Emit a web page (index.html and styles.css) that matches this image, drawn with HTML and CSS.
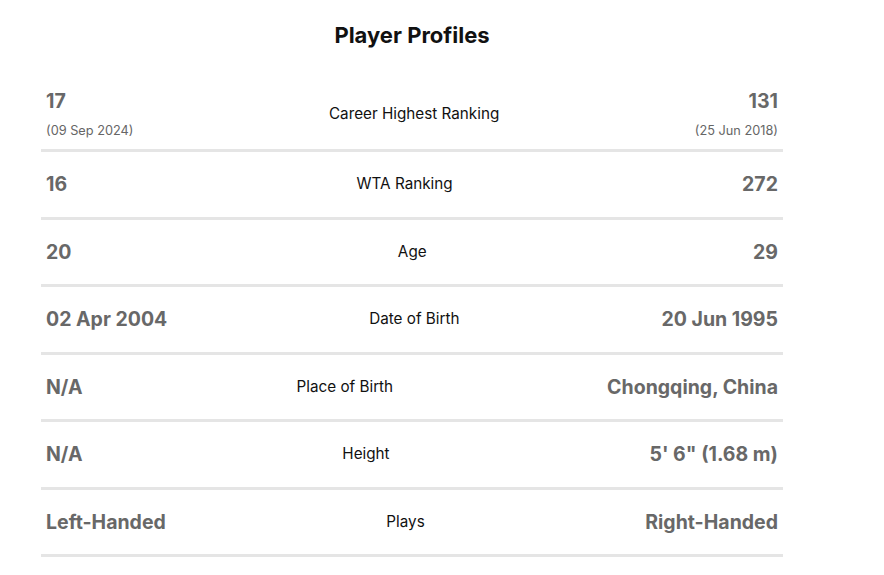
FILE: index.html
```html
<!DOCTYPE html>
<html lang="en">
<head>
<meta charset="utf-8">
<title>Player Profiles</title>
<link rel="stylesheet" href="styles.css">
</head>
<body>
<div class="wrap">
  <h2 class="title">Player Profiles</h2>
  <div class="table">
    <div class="row">
      <div class="val left">17<div class="sub">(09 Sep 2024)</div></div>
      <div class="label">Career Highest Ranking</div>
      <div class="val right">131<div class="sub">(25 Jun 2018)</div></div>
    </div>
    <div class="row">
      <div class="val left">16</div>
      <div class="label">WTA Ranking</div>
      <div class="val right">272</div>
    </div>
    <div class="row">
      <div class="val left">20</div>
      <div class="label">Age</div>
      <div class="val right">29</div>
    </div>
    <div class="row">
      <div class="val left">02 Apr 2004</div>
      <div class="label">Date of Birth</div>
      <div class="val right">20 Jun 1995</div>
    </div>
    <div class="row">
      <div class="val left">N/A</div>
      <div class="label">Place of Birth</div>
      <div class="val right">Chongqing, China</div>
    </div>
    <div class="row">
      <div class="val left">N/A</div>
      <div class="label">Height</div>
      <div class="val right">5' 6" (1.68 m)</div>
    </div>
    <div class="row">
      <div class="val left">Left-Handed</div>
      <div class="label">Plays</div>
      <div class="val right">Right-Handed</div>
    </div>
  </div>
</div>
</body>
</html>
```
FILE: styles.css
```css
html, body {
  margin: 0;
  padding: 0;
  background: #ffffff;
}
body {
  font-family: Inter, "Liberation Sans", Arial, sans-serif;
  color: #111111;
}
.wrap {
  width: 742px;
  margin-left: 41px;
  padding-top: 21px;
}
.title {
  margin: 0;
  text-align: center;
  font-size: 22px;
  line-height: 28px;
  font-weight: 700;
  color: #111111;
}
.table {
  margin-top: 30px;
}
.row {
  display: flex;
  justify-content: space-between;
  align-items: center;
  box-sizing: border-box;
  min-height: 67.5px;
  padding: 10px 5px;
  border-bottom: 3px solid #e5e5e5;
}
.val {
  font-size: 19.5px;
  line-height: 24px;
  font-weight: 700;
  color: #686868;
}
.right {
  text-align: right;
}
.sub {
  margin-top: 10px;
  font-size: 12.75px;
  line-height: 16px;
  font-weight: 400;
  color: #666666;
}
.label {
  font-size: 15.25px;
  line-height: 20px;
  color: #111111;
  text-align: center;
}
```
